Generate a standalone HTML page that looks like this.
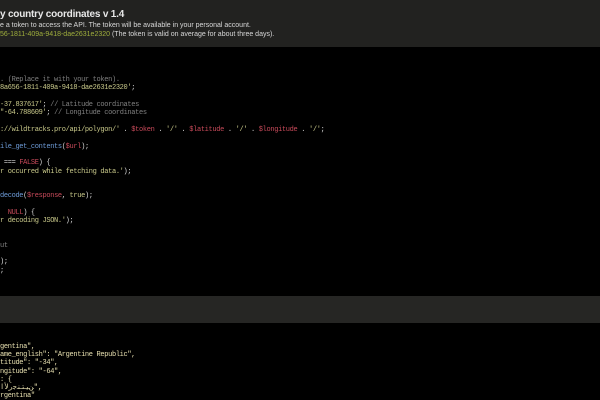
<!DOCTYPE html>
<html><head><meta charset="utf-8"><style>
body{margin:0;width:600px;height:400px;background:#000;overflow:hidden;position:relative;font-family:"Liberation Sans",sans-serif}
.hd{position:absolute;left:0;top:0;width:600px;height:47px;background:#222220}
.t{position:absolute;left:0;top:9px;color:#e8e8e8;font-weight:bold;font-size:10px;letter-spacing:-0.2px;white-space:nowrap}
.s{position:absolute;left:0;color:#d8d8d8;font-size:7px;white-space:nowrap}
.g{color:#9fae3c}
.band{position:absolute;left:0;top:296px;width:600px;height:27px;background:#262624}
.c{position:absolute;left:0;font-family:"Liberation Mono",monospace;font-size:7px;letter-spacing:-0.34px;white-space:pre;color:#d8d8d8;line-height:8px}
.cm{color:#808080}.st{color:#c9c98a}.v{color:#c84a5a}.f{color:#6d9bd8}.k{color:#c84a5a}.j{color:#e8e0b0}
</style></head><body>
<div class="hd"></div>
<div class="t">y country coordinates v 1.4</div>
<div class="s" style="top:22px">e a token to access the API. The token will be available in your personal account.</div>
<div class="s" style="top:31px"><span class="g">56-1811-409a-9418-dae2631e2320</span> (The token is valid on average for about three days).</div>

<div class="c" style="top:76px"><span class="cm">. (Replace it with your token).</span></div>
<div class="c" style="top:84px"><span class="st">8a656-1811-409a-9418-dae2631e2320'</span>;</div>
<div class="c" style="top:101px"><span class="st">-37.837617'</span>; <span class="cm">// Latitude coordinates</span></div>
<div class="c" style="top:109px"><span class="st">"-64.788609'</span>; <span class="cm">// Longitude coordinates</span></div>
<div class="c" style="top:126px"><span class="st">://wildtracks.pro/api/polygon/'</span> . <span class="v">$token</span> . <span class="st">'/'</span> . <span class="v">$latitude</span> . <span class="st">'/'</span> . <span class="v">$longitude</span> . <span class="st">'/'</span>;</div>
<div class="c" style="top:143px"><span class="f">ile_get_contents</span>(<span class="v">$url</span>);</div>
<div class="c" style="top:159px"> === <span class="k">FALSE</span>) {</div>
<div class="c" style="top:168px"><span class="st">r occurred while fetching data.'</span>);</div>
<div class="c" style="top:192px"><span class="f">decode</span>(<span class="v">$response</span>, <span class="st">true</span>);</div>
<div class="c" style="top:209px">  <span class="k">NULL</span>) {</div>
<div class="c" style="top:217px"><span class="st">r decoding JSON.'</span>);</div>
<div class="c" style="top:242px"><span class="cm">ut</span></div>
<div class="c" style="top:258px">);</div>
<div class="c" style="top:267px">;</div>

<div class="band"></div>
<div class="c j" style="top:343px">gentina",</div>
<div class="c j" style="top:351px">ame_english": "Argentine Republic",</div>
<div class="c j" style="top:359px">titude": "-34",</div>
<div class="c j" style="top:368px">ngitude": "-64",</div>
<div class="c j" style="top:376px">: {</div>
<div class="c j" style="top:384px">ﻦﯿﺘﻨﺟرﻷا",</div>
<div class="c j" style="top:392px">rgentina"</div>
</body></html>
